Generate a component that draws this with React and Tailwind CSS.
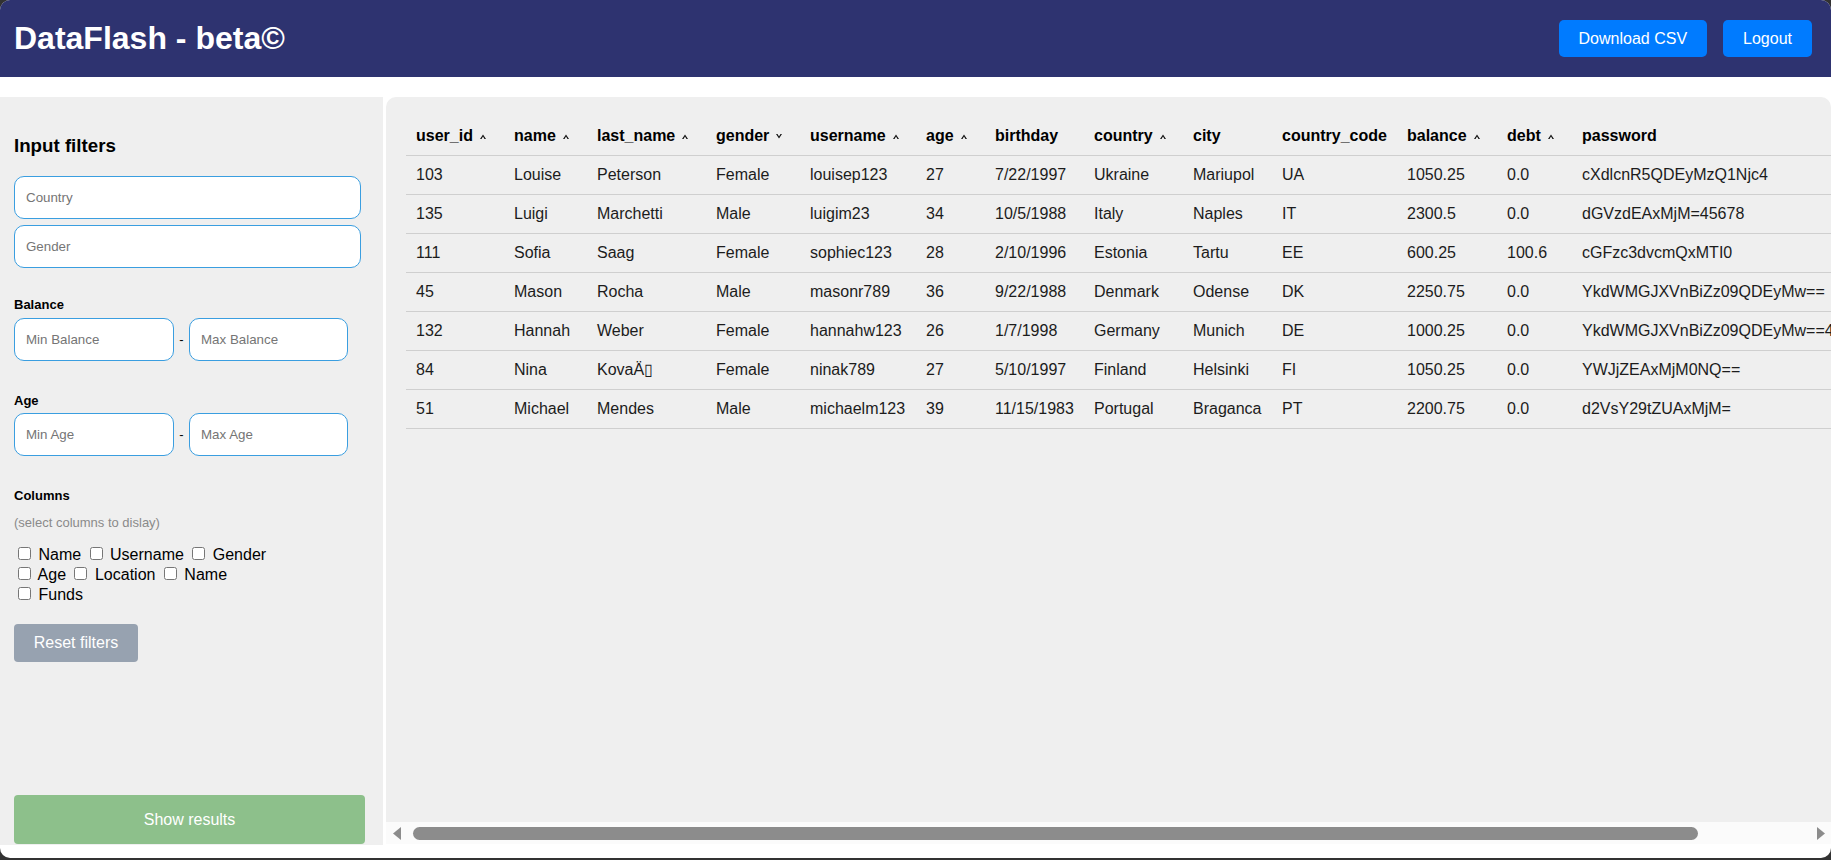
import React from 'react';

const columns = [
  { key: 'user_id', w: 'w-[98px]', sort: 'up' },
  { key: 'name', w: 'w-[83px]', sort: 'up' },
  { key: 'last_name', w: 'w-[119px]', sort: 'up' },
  { key: 'gender', w: 'w-[94px]', sort: 'down' },
  { key: 'username', w: 'w-[116px]', sort: 'up' },
  { key: 'age', w: 'w-[69px]', sort: 'up' },
  { key: 'birthday', w: 'w-[99px]', sort: null },
  { key: 'country', w: 'w-[99px]', sort: 'up' },
  { key: 'city', w: 'w-[89px]', sort: null },
  { key: 'country_code', w: 'w-[125px]', sort: null },
  { key: 'balance', w: 'w-[100px]', sort: 'up' },
  { key: 'debt', w: 'w-[75px]', sort: 'up' },
  { key: 'password', w: 'w-[364px]', sort: null },
];

const rows = [
  ['103', 'Louise', 'Peterson', 'Female', 'louisep123', '27', '7/22/1997', 'Ukraine', 'Mariupol', 'UA', '1050.25', '0.0', 'cXdlcnR5QDEyMzQ1Njc4'],
  ['135', 'Luigi', 'Marchetti', 'Male', 'luigim23', '34', '10/5/1988', 'Italy', 'Naples', 'IT', '2300.5', '0.0', 'dGVzdEAxMjM=45678'],
  ['111', 'Sofia', 'Saag', 'Female', 'sophiec123', '28', '2/10/1996', 'Estonia', 'Tartu', 'EE', '600.25', '100.6', 'cGFzc3dvcmQxMTI0'],
  ['45', 'Mason', 'Rocha', 'Male', 'masonr789', '36', '9/22/1988', 'Denmark', 'Odense', 'DK', '2250.75', '0.0', 'YkdWMGJXVnBiZz09QDEyMw=='],
  ['132', 'Hannah', 'Weber', 'Female', 'hannahw123', '26', '1/7/1998', 'Germany', 'Munich', 'DE', '1000.25', '0.0', 'YkdWMGJXVnBiZz09QDEyMw==45678'],
  ['84', 'Nina', 'Kova\u00C4\u25AF', 'Female', 'ninak789', '27', '5/10/1997', 'Finland', 'Helsinki', 'FI', '1050.25', '0.0', 'YWJjZEAxMjM0NQ=='],
  ['51', 'Michael', 'Mendes', 'Male', 'michaelm123', '39', '11/15/1983', 'Portugal', 'Braganca', 'PT', '2200.75', '0.0', 'd2VsY29tZUAxMjM='],
];

const SortCaret = ({ dir }) => (
  <svg width="6" height="5" viewBox="0 0 6 5" className={`ml-[7px] inline-block ${dir === 'down' ? 'rotate-180' : ''}`}>
    <path d="M0 5 L3 0.4 L6 5 L4.5 5 L3 2.6 L1.5 5 Z" fill="#111" />
  </svg>
);

const TextInput = ({ placeholder, className }) => (
  <input
    type="text"
    placeholder={placeholder}
    className={`h-[43px] rounded-[10px] border border-[#3a9ee0] bg-white px-[11px] text-[13.33px] text-black outline-none placeholder:text-[#757575] ${className}`}
  />
);

const Check = ({ label }) => (
  <label className="whitespace-nowrap">
    <input type="checkbox" className="ml-[4px] mr-[3px]" /> {label}
  </label>
);

const Sidebar = () => (
  <aside className="flex w-[383px] shrink-0 flex-col bg-[#efefef] px-[14px] pb-[1px] pt-[38px]">
    <h3 className="text-[18.72px] font-bold leading-[22px] text-black">Input filters</h3>

    <TextInput placeholder="Country" className="mt-[19px] w-[347px]" />
    <TextInput placeholder="Gender" className="mt-[6px] w-[347px]" />

    <p className="mt-[29px] text-[13px] font-bold leading-[15px] text-black">Balance</p>
    <div className="mt-[6px] flex items-center">
      <TextInput placeholder="Min Balance" className="w-[160px]" />
      <span className="w-[15px] text-center text-[13px] text-black">-</span>
      <TextInput placeholder="Max Balance" className="w-[159px]" />
    </div>

    <p className="mt-[32px] text-[13px] font-bold leading-[15px] text-black">Age</p>
    <div className="mt-[5px] flex items-center">
      <TextInput placeholder="Min Age" className="w-[160px]" />
      <span className="w-[15px] text-center text-[13px] text-black">-</span>
      <TextInput placeholder="Max Age" className="w-[159px]" />
    </div>

    <p className="mt-[32px] text-[13px] font-bold leading-[15px] text-black">Columns</p>
    <p className="mt-[12px] text-[13px] leading-[15px] text-[#8a8a8a]">(select columns to dislay)</p>

    <div className="mt-[15px] w-[272px] text-[16px] leading-[20px] text-black">
      <Check label="Name" /> <Check label="Username" /> <Check label="Gender" />{' '}
      <Check label="Age" /> <Check label="Location" /> <Check label="Name" />{' '}
      <Check label="Funds" />
    </div>

    <button className="mt-[19px] h-[38px] w-[124px] rounded-[4px] bg-[#97a2b0] text-[16px] text-white">
      Reset filters
    </button>

    <button className="mt-auto h-[49px] w-[351px] rounded-[4px] bg-[#8dc08b] text-[16px] text-white">
      Show results
    </button>
  </aside>
);

const ScrollArrow = ({ dir }) => (
  <svg width="8" height="13" viewBox="0 0 8 13" className="shrink-0">
    <path d={dir === 'left' ? 'M8 0 L0 6.5 L8 13 Z' : 'M0 0 L8 6.5 L0 13 Z'} fill="#8c8c8c" />
  </svg>
);

const ResultsTable = () => (
  <section className="ml-[3px] flex h-[747px] min-w-0 flex-1 flex-col overflow-hidden rounded-t-[10px] bg-[#efefef]">
    <div className="min-h-0 flex-1 overflow-hidden px-[20px] pt-[20px]">
      <table className="w-[1530px] table-fixed border-collapse text-left text-[16px] leading-[18px]">
        <thead>
          <tr className="border-b border-[#cfcfcf]">
            {columns.map((c) => (
              <th key={c.key} className={`${c.w} whitespace-nowrap px-[10px] py-[10px] font-bold text-black`}>
                {c.key}
                {c.sort && <SortCaret dir={c.sort} />}
              </th>
            ))}
          </tr>
        </thead>
        <tbody>
          {rows.map((r) => (
            <tr key={r[0]} className="border-b border-[#cfcfcf]">
              {r.map((v, i) => (
                <td key={i} className="whitespace-nowrap px-[10px] py-[10px] text-[#1c1c1c]">
                  {v}
                </td>
              ))}
            </tr>
          ))}
        </tbody>
      </table>
    </div>
    <div className="flex h-[22px] shrink-0 items-center bg-[#fbfbfb] pl-[7px] pr-[6px]">
      <ScrollArrow dir="left" />
      <div className="ml-[12px] h-[13px] w-[1285px] rounded-full bg-[#8c8c8c]" />
      <div className="flex-1" />
      <ScrollArrow dir="right" />
    </div>
  </section>
);

export default function App() {
  return (
    <div className="min-h-screen bg-[#323232] font-['Liberation_Sans',Arial,sans-serif]">
      <div className="flex h-[858px] flex-col overflow-hidden rounded-[10px] bg-white">
        <header className="flex h-[77px] shrink-0 items-center justify-between bg-[#2e3370] pl-[14px] pr-[19px]">
          <h1 className="text-[32px] font-bold leading-[37px] text-white">DataFlash - beta©</h1>
          <div className="flex gap-[16px]">
            <button className="h-[37px] rounded-[5px] bg-[#007bff] px-[20px] text-[16px] text-white">Download CSV</button>
            <button className="h-[37px] rounded-[5px] bg-[#007bff] px-[20px] text-[16px] text-white">Logout</button>
          </div>
        </header>
        <main className="mt-[20px] flex h-[748px]">
          <Sidebar />
          <ResultsTable />
        </main>
      </div>
    </div>
  );
}
